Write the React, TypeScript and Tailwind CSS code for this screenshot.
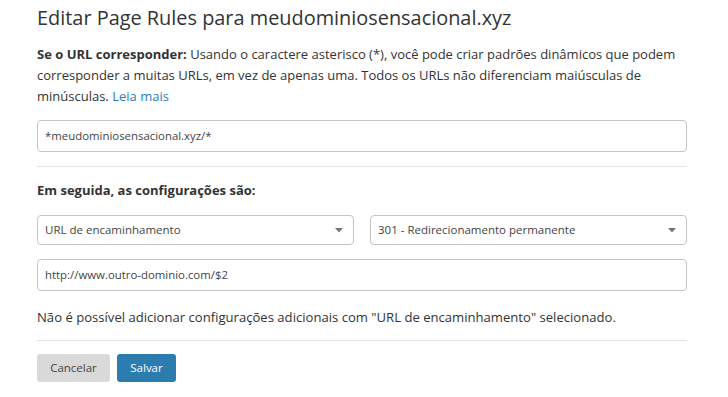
import type { ReactNode } from "react";

function Select({ children }: { children: ReactNode }) {
  return (
    <div className="flex h-[30px] flex-1 items-center justify-between rounded-[4px] border border-[#c4c4c4] bg-white pl-[7px] pr-[10px] text-[11.5px] text-[#444]">
      <span>{children}</span>
      <svg width="8" height="5" viewBox="0 0 8 5" className="text-[#777]">
        <path d="M0 0h8L4 4.5z" fill="currentColor" />
      </svg>
    </div>
  );
}

function TextField({ value }: { value: string }) {
  return (
    <div className="flex h-[32px] items-center rounded-[4px] border border-[#c4c4c4] bg-white px-[7px] text-[11.4px] text-[#444]">
      {value}
    </div>
  );
}

export default function App() {
  return (
    <div className="min-h-[397px] w-[728px] bg-white font-['Open_Sans',sans-serif] text-[#333]">
      <div className="w-[687px] pl-[37px] pt-[5px]">
        <h1 className="text-[19.9px] leading-[26px] font-normal text-[#333]">
          Editar Page Rules para meudominiosensacional.xyz
        </h1>

        <p className="mt-[13px] text-[13px] leading-[21px]">
          <strong className="font-bold">Se o URL corresponder:</strong> Usando o caractere asterisco (*), você pode
          criar padrões dinâmicos que podem corresponder a muitas URLs, em vez de apenas uma. Todos os URLs não
          diferenciam maiúsculas de minúsculas.{" "}
          <a className="text-[#2f7bbf]" href="#">
            Leia mais
          </a>
        </p>

        <div className="mt-[13px]">
          <TextField value="*meudominiosensacional.xyz/*" />
        </div>

        <div className="mt-[14px] h-px bg-[#e6e6e6]" />

        <h2 className="mt-[13px] text-[13px] leading-[20px] font-bold">Em seguida, as configurações são:</h2>

        <div className="mt-[15px] flex gap-[16px]">
          <Select>URL de encaminhamento</Select>
          <Select>301 - Redirecionamento permanente</Select>
        </div>

        <div className="mt-[14px]">
          <TextField value="http://www.outro-dominio.com/$2" />
        </div>

        <p className="mt-[16px] text-[13.1px] leading-[20px]">
          Não é possível adicionar configurações adicionais com "URL de encaminhamento" selecionado.
        </p>

        <div className="mt-[13px] h-px bg-[#e6e6e6]" />

        <div className="mt-[13px] flex gap-[7px]">
          <button className="h-[28px] w-[73px] rounded-[3px] bg-[#d9d9d9] text-[11.5px] text-[#444]">Cancelar</button>
          <button className="h-[28px] w-[59px] rounded-[3px] bg-[#2c7cb0] text-[11.5px] text-white">Salvar</button>
        </div>
      </div>
    </div>
  );
}
